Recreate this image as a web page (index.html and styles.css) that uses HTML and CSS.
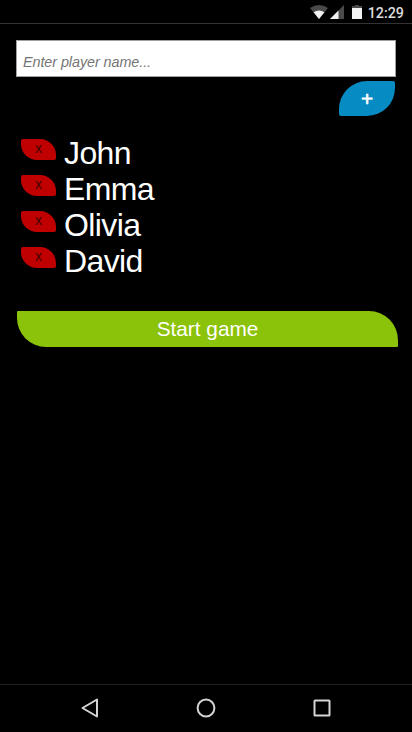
FILE: index.html
```
<!DOCTYPE html>
<html lang="en">
<head>
  <meta charset="UTF-8" />
  <meta name="viewport" content="width=device-width, initial-scale=1" />
  <title>Players</title>
  <link rel="stylesheet" href="styles.css">
</head>
<body>
  <header class="status-bar">
    <svg class="wifi" width="18" height="14" viewBox="0 0 18 14">
      <path d="M0 3 Q9 -3 18 3 L9 14 Z" fill="#4a4a4a" />
      <path d="M3.6 7.2 Q9 3.8 14.4 7.2 L9 14 Z" fill="#f2f2f2" />
    </svg>
    <svg class="signal" width="14" height="14" viewBox="0 0 14 14">
      <path d="M14 0 V14 H0 Z" fill="#4a4a4a" />
      <path d="M8.5 5.5 V14 H0 Z" fill="#f2f2f2" />
    </svg>
    <svg class="battery" width="10" height="15" viewBox="0 0 10 15">
      <path d="M3 0 H7 V1 H10 V3 H0 V1 H3 Z" fill="#4a4a4a" />
      <path d="M0 3 H10 V14 H0 Z" fill="#f2f2f2" />
    </svg>
    <span class="clock">12:29</span>
  </header>

  <main>
    <form class="player-form" id="player-form">
      <input type="text" class="player-name" id="player-name" placeholder="Enter player name..." />
      <button type="submit" class="btn-add">+</button>
    </form>

    <ul class="players">
      <li><button class="btn-delete">x</button><span>John</span></li>
      <li><button class="btn-delete">x</button><span>Emma</span></li>
      <li><button class="btn-delete">x</button><span>Olivia</span></li>
      <li><button class="btn-delete">x</button><span>David</span></li>
    </ul>

    <button class="btn-start">Start game</button>
  </main>

  <footer class="nav-bar">
    <svg width="20" height="22" viewBox="0 0 20 22">
      <path d="M17 2.5 V19.5 L2.5 11 Z" />
    </svg>
    <svg width="22" height="22" viewBox="0 0 22 22">
      <circle cx="11" cy="11" r="8.4" />
    </svg>
    <svg width="20" height="22" viewBox="0 0 20 22">
      <rect x="2.5" y="3.5" width="15" height="15" rx="0.5" />
    </svg>
  </footer>
</body>
</html>
```

FILE: styles.css
```
* { box-sizing: border-box; }
body { margin: 0; height: 732px; display: flex; flex-direction: column; background: #000; color: #fff; font-family: "Liberation Sans", Arial, sans-serif; overflow: hidden; }
button { border: 0; padding: 0; font-family: inherit; }

.status-bar { height: 24px; display: flex; justify-content: flex-end; align-items: flex-start; padding: 5px 8px 0 0; border-bottom: 1px solid #333; }
.wifi { margin-right: 2px; }
.signal { margin-right: 8px; }
.battery { margin-right: 6px; }
.clock { font: 500 14.3px/17px Roboto, sans-serif; color: #dcdcdc; }

main { flex: 1; padding: 16px 14px 0 16px; }
.player-form { display: flex; flex-direction: column; align-items: flex-end; padding-right: 2px; }
.player-name { width: 100%; height: 37px; padding: 7px 6px 0; border: 1px solid #a0a0a0; border-radius: 0; background: #fff; font: 14.4px "Liberation Sans", Arial, sans-serif; letter-spacing: -0.08px; }
.player-name::placeholder { color: #757575; font-style: italic; }
.btn-add { width: 56px; height: 35px; margin: 4px 1px 0 0; background: #078bc3; color: #fff; border-radius: 28px 2px; font-size: 20.8px; -webkit-text-stroke: 0.6px #fff; }

.players { list-style: none; margin: 19px 0 0; padding: 0 0 0 5px; font-size: 32px; line-height: 36px; letter-spacing: -0.6px; }
.players li { display: flex; align-items: flex-start; height: 36px; }
.btn-delete { width: 35px; height: 21px; margin: 4px 8px 0 0; padding-bottom: 2px; background: #c00000; color: #400; border-radius: 2px 16px; font-size: 14px; line-height: 19px; }

.btn-start { display: block; width: 381px; height: 36px; margin: 32px 0 0 1px; background: #8bc20a; color: #fff; border-radius: 1px 29px; font-size: 20.8px; }

.nav-bar { height: 48px; display: flex; align-items: center; justify-content: center; gap: 95px; padding-bottom: 2px; border-top: 1px solid #222; }
.nav-bar svg { fill: none; stroke: #d4d4d4; stroke-width: 2; stroke-linejoin: round; }
```
